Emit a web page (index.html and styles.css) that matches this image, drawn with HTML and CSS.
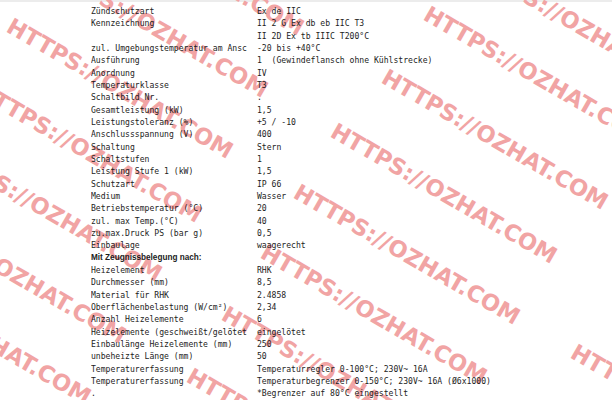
FILE: index.html
```html
<!DOCTYPE html>
<html lang="de">
<head>
    <meta charset="UTF-8">
    <meta name="viewport" content="width=device-width, initial-scale=1.0">
    <title>Technische Daten</title>
    <link rel="stylesheet" href="styles.css">
</head>
<body>
    <div class="topline"></div>

    <!-- watermark layer, drawn under the data -->
    <svg class="watermark" width="612" height="400" aria-hidden="true">
        <g class="wm">
            <text x="464" y="-32" transform="rotate(30 464 -32)">HTTPS://OZHAT.COM</text>
            <text x="422" y="19" transform="rotate(30 422 19)">HTTPS://OZHAT.COM</text>
            <text x="76" y="-92" transform="rotate(30 76 -92)">HTTPS://OZHAT.COM</text>
            <text x="380" y="82" transform="rotate(30 380 82)">HTTPS://OZHAT.COM</text>
            <text x="40" y="-30" transform="rotate(30 40 -30)">HTTPS://OZHAT.COM</text>
            <text x="329" y="136" transform="rotate(30 329 136)">HTTPS://OZHAT.COM</text>
            <text x="5" y="31" transform="rotate(30 5 31)">HTTPS://OZHAT.COM</text>
            <text x="292" y="197" transform="rotate(30 292 197)">HTTPS://OZHAT.COM</text>
            <text x="569" y="357" transform="rotate(30 569 357)">HTTPS://OZHAT.COM</text>
            <text x="-26" y="95" transform="rotate(30 -26 95)">HTTPS://OZHAT.COM</text>
            <text x="259" y="257" transform="rotate(30 259 257)">HTTPS://OZHAT.COM</text>
            <text x="-66" y="154" transform="rotate(30 -66 154)">HTTPS://OZHAT.COM</text>
            <text x="220" y="319" transform="rotate(30 220 319)">HTTPS://OZHAT.COM</text>
            <text x="-102" y="216" transform="rotate(30 -102 216)">HTTPS://OZHAT.COM</text>
            <text x="185" y="381" transform="rotate(30 185 381)">HTTPS://OZHAT.COM</text>
            <text x="-137" y="277" transform="rotate(30 -137 277)">HTTPS://OZHAT.COM</text>
        </g>
    </svg>

    <div class="specs">
        <div class="label">Zündschutzart</div><div class="value">Ex de IIC</div>
        <div class="label">Kennzeichnung</div><div class="value">II 2 G Ex db eb IIC T3</div>
        <div class="label"></div><div class="value">II 2D Ex tb IIIC T200°C</div>
        <div class="label">zul. Umgebungstemperatur am Anschlusskasten</div><div class="value">-20 bis +40°C</div>
        <div class="label">Ausführung</div><div class="value">1  (Gewindeflansch ohne Kühlstrecke)</div>
        <div class="label">Anordnung</div><div class="value">IV</div>
        <div class="label">Temperaturklasse</div><div class="value">T3</div>
        <div class="label">Schaltbild Nr.</div><div class="value">.</div>
        <div class="label">Gesamtleistung (kW)</div><div class="value">1,5</div>
        <div class="label">Leistungstoleranz (%)</div><div class="value">+5 / -10</div>
        <div class="label">Anschlussspannung (V)</div><div class="value">400</div>
        <div class="label">Schaltung</div><div class="value">Stern</div>
        <div class="label">Schaltstufen</div><div class="value">1</div>
        <div class="label">Leistung Stufe 1 (kW)</div><div class="value">1,5</div>
        <div class="label">Schutzart</div><div class="value">IP 66</div>
        <div class="label">Medium</div><div class="value">Wasser</div>
        <div class="label">Betriebstemperatur (°C)</div><div class="value">20</div>
        <div class="label">zul. max Temp.(°C)</div><div class="value">40</div>
        <div class="label">zu.max.Druck PS (bar g)</div><div class="value">0,5</div>
        <div class="label">Einbaulage</div><div class="value">waagerecht</div>
        <div class="heading">Mit Zeugnissbelegung nach:</div>
        <div class="label">Heizelement</div><div class="value">RHK</div>
        <div class="label">Durchmesser (mm)</div><div class="value">8,5</div>
        <div class="label">Material für RHK</div><div class="value">2.4858</div>
        <div class="label">Oberflächenbelastung (W/cm²)</div><div class="value">2,34</div>
        <div class="label">Anzahl Heizelemente</div><div class="value">6</div>
        <div class="label">Heizelemente (geschweißt/gelötet)</div><div class="value">eingelötet</div>
        <div class="label">Einbaulänge Heizelemente (mm)</div><div class="value">250</div>
        <div class="label">unbeheizte Länge (mm)</div><div class="value">50</div>
        <div class="label">Temperaturerfassung</div><div class="value">Temperaturregler 0-100°C; 230V~ 16A</div>
        <div class="label">Temperaturerfassung</div><div class="value">Temperaturbegrenzer 0-150°C; 230V~ 16A (Ø6x1000)</div>
        <div class="label">.</div><div class="value">*Begrenzer auf 80°C eingestellt</div>
    </div>
</body>
</html>
```

FILE: styles.css
```css
body {
    margin: 0;
    background: #fff;
    color: #1c1c1c;
    position: relative;
    height: 400px;
    overflow: hidden;
}
.topline {
    height: 2px;
    background-color: #ececec;
}
.watermark {
    position: absolute;
    top: 0;
    left: 0;
    z-index: 1;
    pointer-events: none;
}
.wm text {
    font-family: "DejaVu Sans", sans-serif;
    font-weight: bold;
    font-size: 22.5px;
    fill: #f1a4a4;
}
.specs {
    position: relative;
    z-index: 2;
    display: grid;
    grid-template-columns: 156px auto;
    column-gap: 10px;
    margin-left: 91px;
    padding-top: 3px;
    font-family: "DejaVu Sans Mono", monospace;
    font-size: 8.1px;
    line-height: 12.33px;
}
.label {
    overflow: hidden;
    white-space: pre;
}
.value {
    white-space: pre;
}
.heading {
    grid-column: 1 / -1;
    font-family: "Liberation Sans", Arial, sans-serif;
    font-weight: bold;
    font-size: 8.2px;
}
```
